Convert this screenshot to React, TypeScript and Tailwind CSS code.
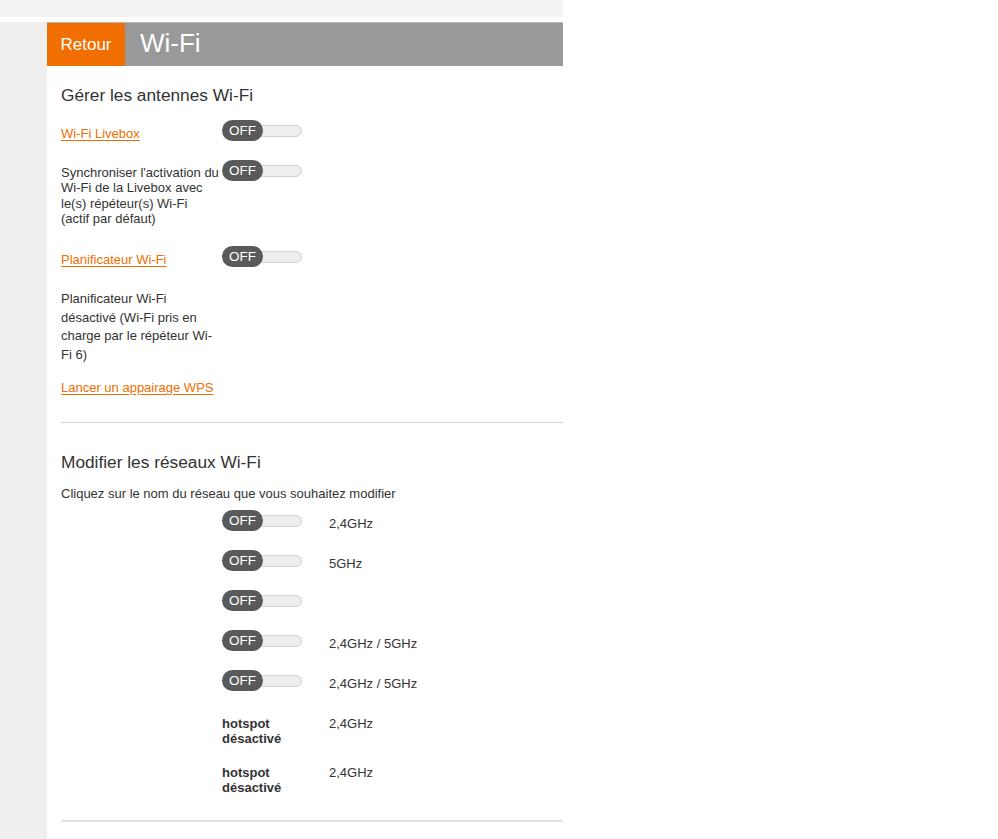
import React from "react";

function Toggle() {
  return (
    <div className="relative w-[80px] h-[21px] shrink-0">
      <div className="absolute left-[2px] right-0 top-[5px] h-[12px] rounded-full bg-[#eeeeee] border border-[#d2d2d2]" />
      <div className="absolute left-0 top-0 w-[41px] h-[21px] rounded-full bg-[#5a5a5a] text-white text-[13.5px] leading-[21px] text-center">
        OFF
      </div>
    </div>
  );
}

function Link({ children }: { children: React.ReactNode }) {
  return <span className="text-[#f16e00] underline underline-offset-[2px]">{children}</span>;
}

function NetRow({ label }: { label?: string }) {
  return (
    <div className="flex items-start h-[40px]">
      <div className="w-[161px] shrink-0" />
      <div className="w-[107px] shrink-0">
        <Toggle />
      </div>
      <div className="pt-[6px] leading-[15px]">{label}</div>
    </div>
  );
}

function HotspotRow() {
  return (
    <div className="flex items-start h-[49px]">
      <div className="w-[161px] shrink-0" />
      <div className="w-[107px] shrink-0 font-bold leading-[15px]">
        <div>hotspot</div>
        <div>désactivé</div>
      </div>
      <div className="leading-[15px]">2,4GHz</div>
    </div>
  );
}

export default function App() {
  return (
    <div className="w-[998px] h-[839px] bg-white overflow-hidden font-['Liberation_Sans',Arial,sans-serif] text-[13px] text-[#333333]">
      <div className="w-[563px] h-[17px] bg-[#f2f3f4]" />
      <div className="h-[5px]" />
      <div className="flex w-[563px] h-[817px]">
        <div className="w-[47px] shrink-0 bg-[#efefef]" />
        <div className="flex-1 flex flex-col">
          <div className="flex h-[44px] border-t border-[#b5b5b5]">
            <div className="w-[78px] bg-[#f16e00] text-white text-[17px] flex items-center justify-center">
              Retour
            </div>
            <div className="flex-1 bg-[#999999] text-white text-[26px] flex items-center pl-[15px] pb-[2px]">
              Wi-Fi
            </div>
          </div>

          <div className="pl-[14px]">
            <div className="mt-[19px] text-[17.3px] leading-[21px] text-[#333]">
              Gérer les antennes Wi-Fi
            </div>

            <div className="mt-[14px] flex items-start">
              <div className="w-[161px] shrink-0 pt-[6px] leading-[15px]">
                <Link>Wi-Fi Livebox</Link>
              </div>
              <Toggle />
            </div>

            <div className="mt-[19px] flex items-start">
              <div className="w-[161px] shrink-0 pt-[5px] leading-[15.3px] whitespace-nowrap">
                <div>Synchroniser l'activation du</div>
                <div>Wi-Fi de la Livebox avec</div>
                <div>le(s) répéteur(s) Wi-Fi</div>
                <div>(actif par défaut)</div>
              </div>
              <Toggle />
            </div>

            <div className="mt-[20px] flex items-start">
              <div className="w-[161px] shrink-0 pt-[6px] leading-[15px]">
                <Link>Planificateur Wi-Fi</Link>
              </div>
              <Toggle />
            </div>

            <div className="mt-[23px] leading-[18.5px] whitespace-nowrap">
              <div>Planificateur Wi-Fi</div>
              <div>désactivé (Wi-Fi pris en</div>
              <div>charge par le répéteur Wi-</div>
              <div>Fi 6)</div>
            </div>

            <div className="mt-[15px] leading-[18.5px]">
              <Link>Lancer un appairage WPS</Link>
            </div>

            <div className="mt-[24px] h-px bg-[#d4d4d4]" />

            <div className="mt-[29px] text-[17.3px] leading-[21px] text-[#333]">
              Modifier les réseaux Wi-Fi
            </div>

            <div className="mt-[13px] leading-[15px]">
              Cliquez sur le nom du réseau que vous souhaitez modifier
            </div>

            <div className="mt-[9px]">
              <NetRow label="2,4GHz" />
              <NetRow label="5GHz" />
              <NetRow />
              <NetRow label="2,4GHz / 5GHz" />
              <NetRow label="2,4GHz / 5GHz" />
            </div>

            <div className="mt-[6px]">
              <HotspotRow />
              <HotspotRow />
            </div>

            <div className="mt-[6px] h-[2px] bg-[#e2e2e2]" />
          </div>
        </div>
      </div>
    </div>
  );
}
